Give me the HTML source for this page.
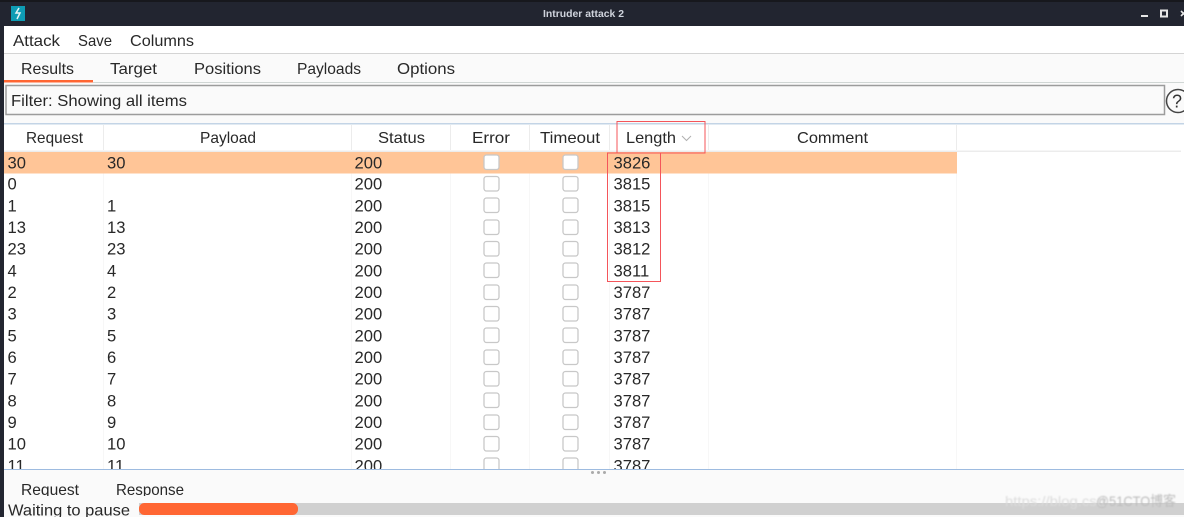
<!DOCTYPE html>
<html><head><meta charset="utf-8"><style>
html,body{margin:0;padding:0;background:#fff;width:1184px;height:517px;overflow:hidden}
svg{display:block;position:absolute;left:0;top:0;filter:blur(.35px)}
text{font-family:"Liberation Sans",sans-serif;font-size:16px;fill:#282828}
.r text{font-size:16.6px}
.cb{fill:#fff;stroke:#c8c8c8;stroke-width:1.3}
</style></head><body>
<svg width="1184" height="517" viewBox="0 0 1184 517">
<defs><clipPath id="t"><rect x="4" y="152" width="1180" height="317"/></clipPath><clipPath id="b"><rect x="4" y="478" width="1180" height="18"/></clipPath><filter id="w"><feGaussianBlur stdDeviation=".9"/></filter></defs>
<rect width="1184" height="517" fill="#fff"/>
<rect width="1184" height="26" fill="#222530"/>
<rect width="1184" height="2" fill="#17181d"/>
<rect y="26" width="4" height="491" fill="#222530"/>
<rect x="11" y="6" width="14" height="15" fill="#0e9cb4"/>
<path d="M19 8l-3 5h4l-3 6" fill="none" stroke="#e4f4f6" stroke-width="1.5"/>
<text x="543" y="17" textLength="81" lengthAdjust="spacingAndGlyphs" style="font-size:10.5px;font-weight:bold;fill:#cfd3dc">Intruder attack 2</text>
<rect x="1141" y="15" width="7" height="2" fill="#e6e6e6"/>
<rect x="1161" y="10.500" width="6" height="6" fill="none" stroke="#e6e6e6" stroke-width="2"/>
<path d="M1181 11l5 5M1186 11l-5 5" stroke="#e6e6e6" stroke-width="1.6"/>
<text x="13" y="46" textLength="47" lengthAdjust="spacingAndGlyphs">Attack</text>
<text x="78" y="46" textLength="34" lengthAdjust="spacingAndGlyphs">Save</text>
<text x="130" y="46" textLength="64" lengthAdjust="spacingAndGlyphs">Columns</text>
<rect x="4" y="53" width="1180" height="1.500" fill="#d4d4d4"/>
<rect x="4" y="54" width="1180" height="28" fill="#fafafa"/>
<text x="21" y="74" textLength="53" lengthAdjust="spacingAndGlyphs">Results</text>
<text x="110" y="74" textLength="47" lengthAdjust="spacingAndGlyphs">Target</text>
<text x="194" y="74" textLength="67" lengthAdjust="spacingAndGlyphs">Positions</text>
<text x="297" y="74" textLength="64" lengthAdjust="spacingAndGlyphs">Payloads</text>
<text x="397" y="74" textLength="58" lengthAdjust="spacingAndGlyphs">Options</text>
<rect x="4" y="80" width="89" height="2.500" fill="#ff6633"/>
<rect x="93" y="82" width="1091" height="1" fill="#d0d6d4"/>
<rect x="4" y="83" width="1180" height="40" fill="#fafafa"/>
<rect x="6" y="85.500" width="1158.500" height="29" fill="#fafafa" stroke="#9c9c9c" stroke-width="1.500"/>
<text x="11" y="106" textLength="176" lengthAdjust="spacingAndGlyphs">Filter: Showing all items</text>
<circle cx="1178" cy="101" r="11.500" fill="none" stroke="#444" stroke-width="1.500"/>
<text x="1172" y="107.500" style="font-size:18px;fill:#333">?</text>
<rect x="4" y="123" width="1180" height="1.500" fill="#c3d4e6"/>
<g fill="#ececec">
<rect x="103" y="125" width="1" height="25"/><rect x="351" y="125" width="1" height="25"/><rect x="450" y="125" width="1" height="25"/><rect x="529" y="125" width="1" height="25"/><rect x="609" y="125" width="1" height="25"/><rect x="708" y="125" width="1" height="25"/><rect x="956" y="125" width="1" height="25"/>
<rect x="4" y="150.500" width="1177" height="1.500"/>
<rect x="103" y="173" width="1" height="296" fill="#f7f7f7"/><rect x="351" y="173" width="1" height="296" fill="#f7f7f7"/><rect x="450" y="173" width="1" height="296" fill="#f7f7f7"/><rect x="529" y="173" width="1" height="296" fill="#f7f7f7"/><rect x="609" y="173" width="1" height="296" fill="#f7f7f7"/><rect x="708" y="173" width="1" height="296" fill="#f7f7f7"/><rect x="956" y="173" width="1" height="296" fill="#f7f7f7"/>
</g>
<text x="26" y="143" textLength="57" lengthAdjust="spacingAndGlyphs">Request</text>
<text x="200" y="143" textLength="56" lengthAdjust="spacingAndGlyphs">Payload</text>
<text x="378" y="143" textLength="47" lengthAdjust="spacingAndGlyphs">Status</text>
<text x="472" y="143" textLength="38" lengthAdjust="spacingAndGlyphs">Error</text>
<text x="540" y="143" textLength="60" lengthAdjust="spacingAndGlyphs">Timeout</text>
<text x="626" y="143" textLength="50" lengthAdjust="spacingAndGlyphs">Length</text>
<path d="M682 136l4.500 4.500 4.500-4.500" fill="none" stroke="#b0b0b0" stroke-width="1"/>
<text x="797" y="143" textLength="71" lengthAdjust="spacingAndGlyphs">Comment</text>
<rect x="4" y="152" width="953" height="21.500" fill="#ffc597"/>
<g clip-path="url(#t)">
<g class="r" transform="translate(-.5 -.5)">
<text x="8" y="169">30</text><text x="107.500" y="169">30</text><text x="355" y="169">200</text><text x="614" y="169">3826</text>
<text x="8" y="190">0</text><text x="355" y="190">200</text><text x="614" y="190">3815</text>
<text x="8" y="212">1</text><text x="107.500" y="212">1</text><text x="355" y="212">200</text><text x="614" y="212">3815</text>
<text x="8" y="233.500">13</text><text x="107.500" y="233.500">13</text><text x="355" y="233.500">200</text><text x="614" y="233.500">3813</text>
<text x="8" y="255">23</text><text x="107.500" y="255">23</text><text x="355" y="255">200</text><text x="614" y="255">3812</text>
<text x="8" y="277">4</text><text x="107.500" y="277">4</text><text x="355" y="277">200</text><text x="614" y="277">3811</text>
<text x="8" y="298.500">2</text><text x="107.500" y="298.500">2</text><text x="355" y="298.500">200</text><text x="614" y="298.500">3787</text>
<text x="8" y="320">3</text><text x="107.500" y="320">3</text><text x="355" y="320">200</text><text x="614" y="320">3787</text>
<text x="8" y="342">5</text><text x="107.500" y="342">5</text><text x="355" y="342">200</text><text x="614" y="342">3787</text>
<text x="8" y="363.500">6</text><text x="107.500" y="363.500">6</text><text x="355" y="363.500">200</text><text x="614" y="363.500">3787</text>
<text x="8" y="385">7</text><text x="107.500" y="385">7</text><text x="355" y="385">200</text><text x="614" y="385">3787</text>
<text x="8" y="407">8</text><text x="107.500" y="407">8</text><text x="355" y="407">200</text><text x="614" y="407">3787</text>
<text x="8" y="428.500">9</text><text x="107.500" y="428.500">9</text><text x="355" y="428.500">200</text><text x="614" y="428.500">3787</text>
<text x="8" y="450">10</text><text x="107.500" y="450">10</text><text x="355" y="450">200</text><text x="614" y="450">3787</text>
<text x="8" y="472">11</text><text x="107.500" y="472">11</text><text x="355" y="472">200</text><text x="614" y="472">3787</text>
</g>
<g class="cb">
<rect x="484" y="155" width="15" height="14.500" rx="2.500"/><rect x="563" y="155" width="15" height="14.500" rx="2.500"/>
<rect x="484" y="176.500" width="15" height="14.500" rx="2.500"/><rect x="563" y="176.500" width="15" height="14.500" rx="2.500"/>
<rect x="484" y="198" width="15" height="14.500" rx="2.500"/><rect x="563" y="198" width="15" height="14.500" rx="2.500"/>
<rect x="484" y="220" width="15" height="14.500" rx="2.500"/><rect x="563" y="220" width="15" height="14.500" rx="2.500"/>
<rect x="484" y="241.500" width="15" height="14.500" rx="2.500"/><rect x="563" y="241.500" width="15" height="14.500" rx="2.500"/>
<rect x="484" y="263" width="15" height="14.500" rx="2.500"/><rect x="563" y="263" width="15" height="14.500" rx="2.500"/>
<rect x="484" y="285" width="15" height="14.500" rx="2.500"/><rect x="563" y="285" width="15" height="14.500" rx="2.500"/>
<rect x="484" y="306.500" width="15" height="14.500" rx="2.500"/><rect x="563" y="306.500" width="15" height="14.500" rx="2.500"/>
<rect x="484" y="328" width="15" height="14.500" rx="2.500"/><rect x="563" y="328" width="15" height="14.500" rx="2.500"/>
<rect x="484" y="350" width="15" height="14.500" rx="2.500"/><rect x="563" y="350" width="15" height="14.500" rx="2.500"/>
<rect x="484" y="371.500" width="15" height="14.500" rx="2.500"/><rect x="563" y="371.500" width="15" height="14.500" rx="2.500"/>
<rect x="484" y="393" width="15" height="14.500" rx="2.500"/><rect x="563" y="393" width="15" height="14.500" rx="2.500"/>
<rect x="484" y="415" width="15" height="14.500" rx="2.500"/><rect x="563" y="415" width="15" height="14.500" rx="2.500"/>
<rect x="484" y="436.500" width="15" height="14.500" rx="2.500"/><rect x="563" y="436.500" width="15" height="14.500" rx="2.500"/>
<rect x="484" y="458" width="15" height="14.500" rx="2.500"/><rect x="563" y="458" width="15" height="14.500" rx="2.500"/>
</g>
</g>
<rect x="617" y="121.500" width="88" height="31.500" fill="none" stroke="#f4555a" stroke-width="1"/>
<rect x="607.500" y="153" width="53" height="128.500" fill="none" stroke="#f4555a" stroke-width="1"/>
<rect x="4" y="469.500" width="1180" height="47.500" fill="#fafafa"/>
<rect x="4" y="469" width="1180" height="1" fill="#9dbbe0"/>
<circle cx="592.500" cy="472.500" r="1.500" fill="#aaa"/><circle cx="598.500" cy="472.500" r="1.500" fill="#aaa"/><circle cx="604.500" cy="472.500" r="1.500" fill="#aaa"/>
<g clip-path="url(#b)">
<text x="21" y="495" textLength="58" lengthAdjust="spacingAndGlyphs">Request</text>
<text x="116" y="495" textLength="68" lengthAdjust="spacingAndGlyphs">Response</text>
</g>
<rect x="139" y="503" width="1045" height="12" fill="#d0d0d0"/>
<rect x="139" y="503" width="159" height="12" rx="5.500" fill="#ff6633"/>
<text x="8" y="515.500" textLength="122" lengthAdjust="spacingAndGlyphs">Waiting to pause</text>
<g filter="url(#w)">
<text x="1005" y="506" textLength="100" lengthAdjust="spacingAndGlyphs" style="font-size:14px;fill:#dcdcdc">https://blog.csd</text>
<text x="1096" y="506" textLength="80" lengthAdjust="spacingAndGlyphs" style='font-family:"Liberation Sans","Noto Sans CJK SC",sans-serif;font-size:14px;fill:#bcbcbc'>@51CTO博客</text>
</g>
</svg>
</body></html>
